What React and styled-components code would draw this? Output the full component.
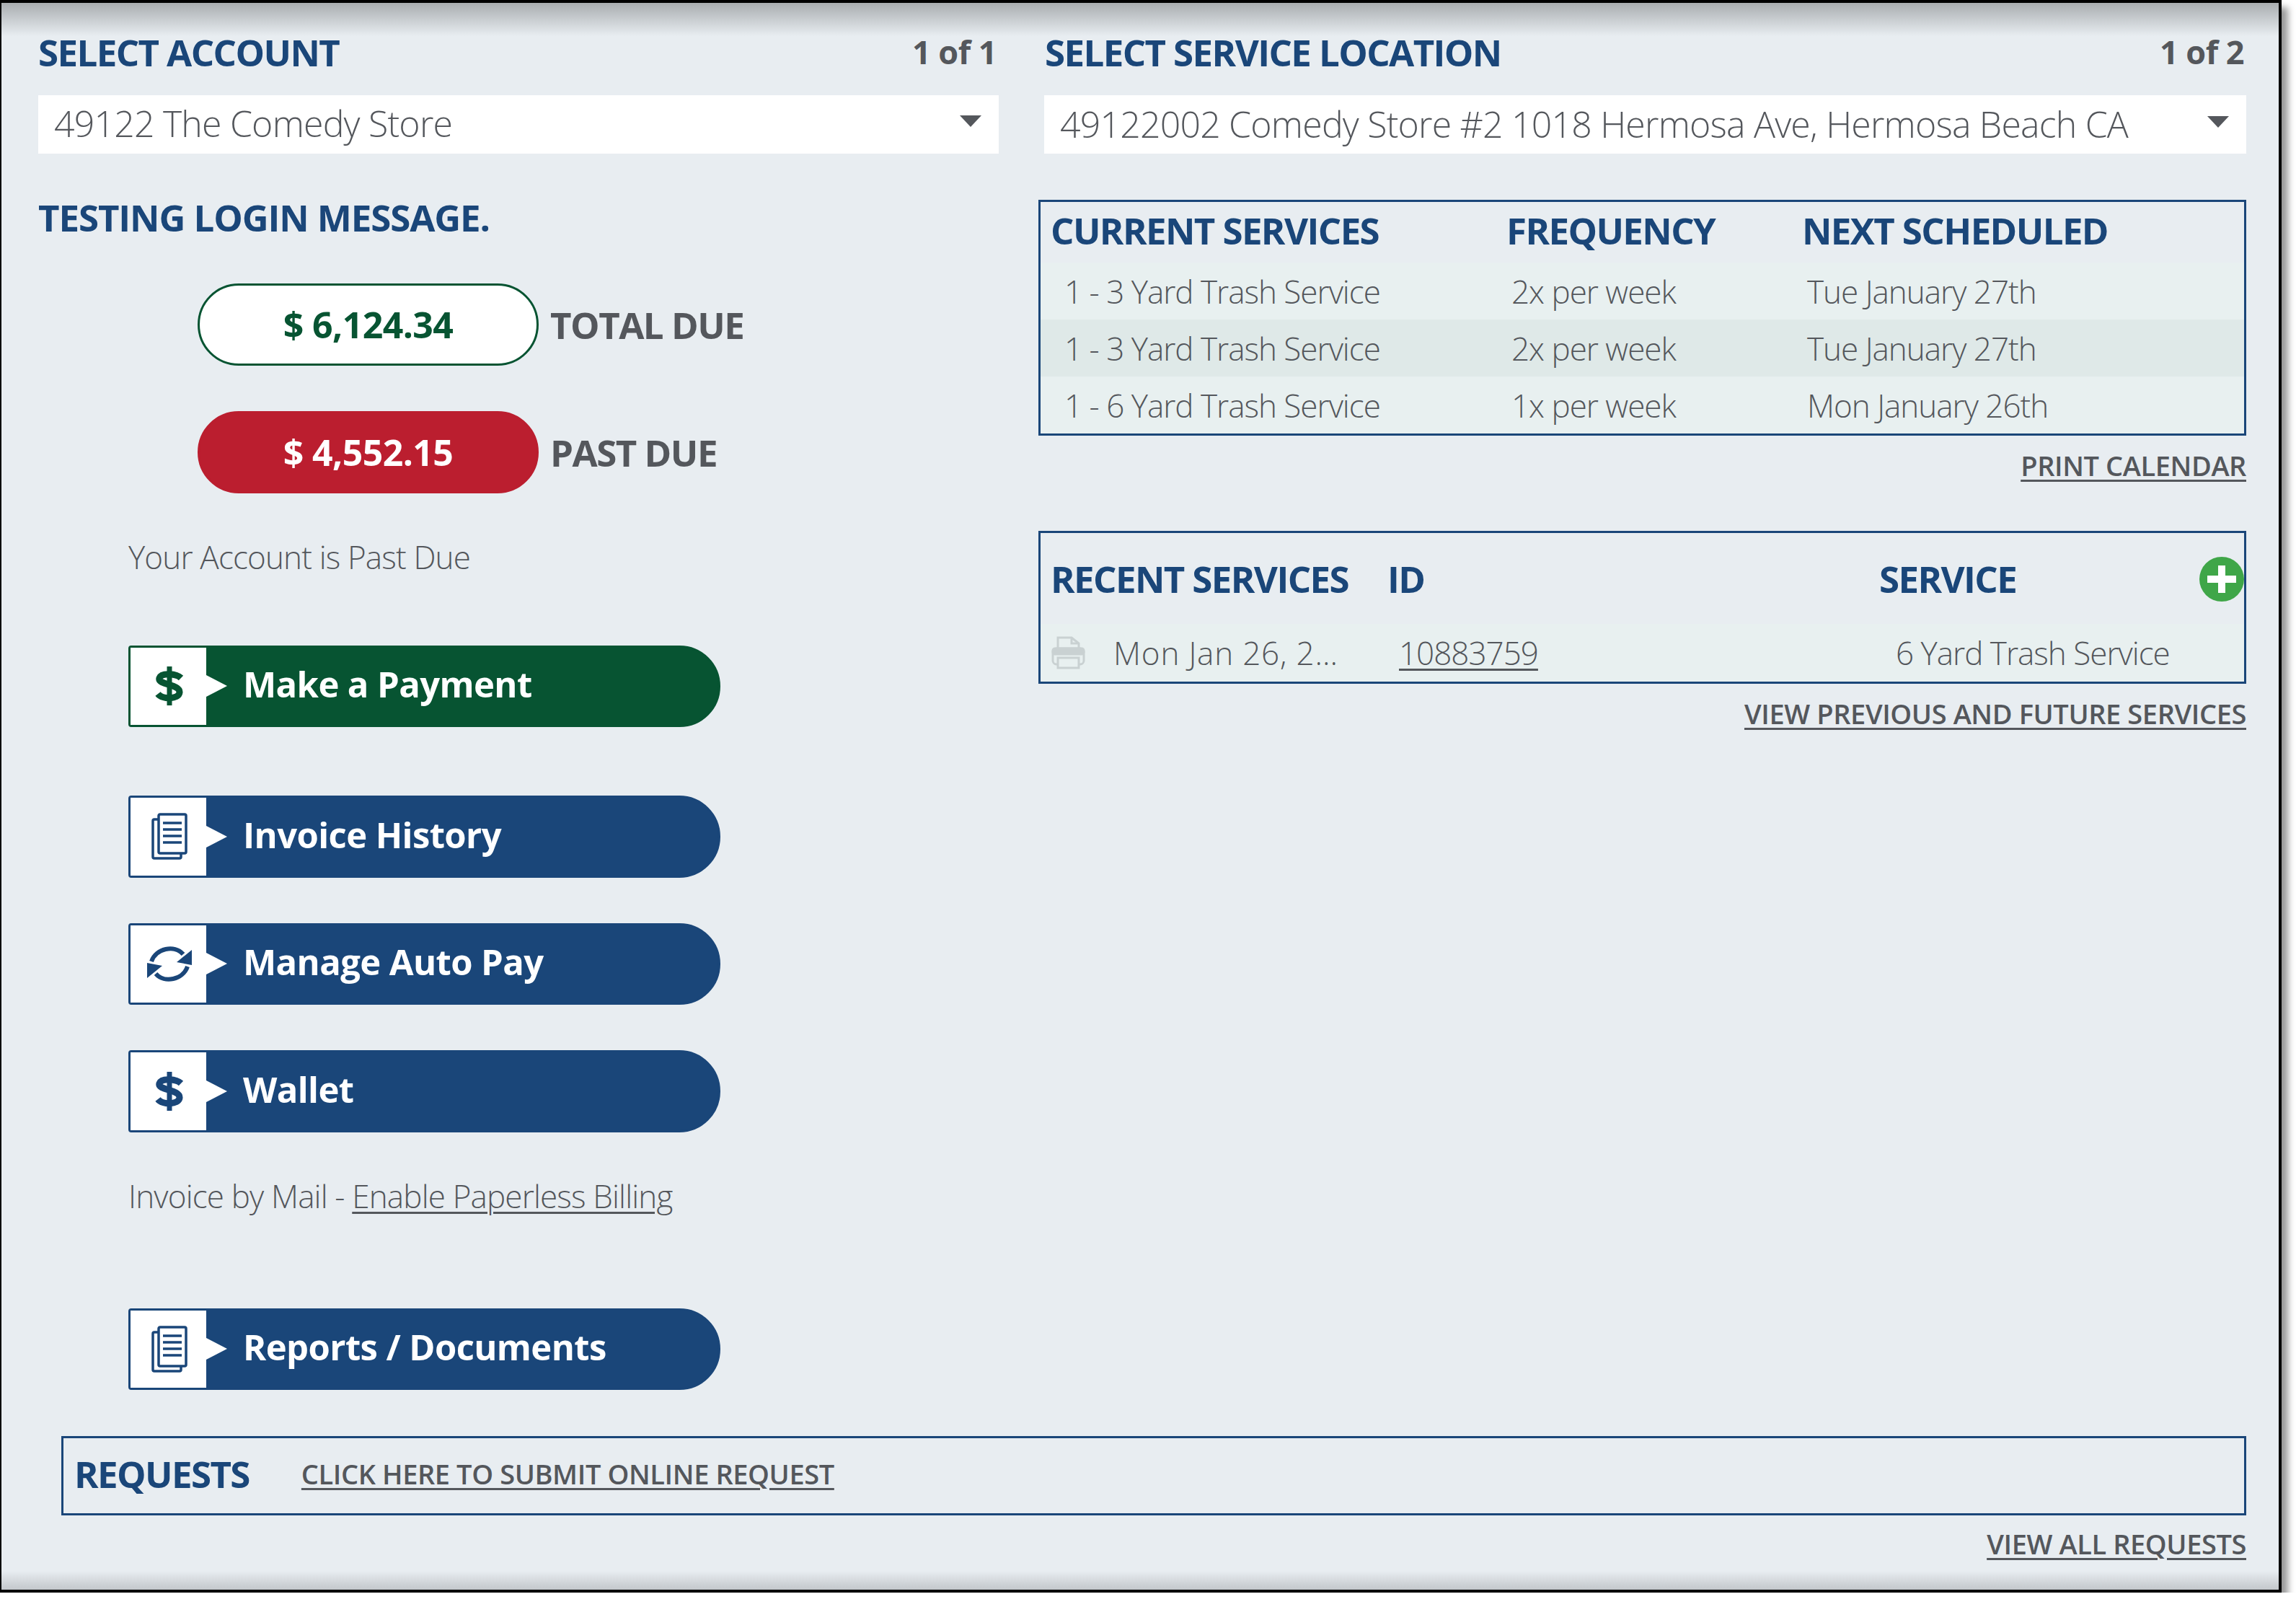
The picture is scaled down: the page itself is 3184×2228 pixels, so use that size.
import React from "react";
import styled, { createGlobalStyle } from "styled-components";

const navy = "#1a4679";
const green = "#075432";
const red = "#bb1e2f";
const gray = "#54575c";

const GlobalStyle = createGlobalStyle`
  html, body {
    margin: 0;
    padding: 0;
    background: #fff;
  }
  * {
    box-sizing: border-box;
  }
`;

const Frame = styled.div`
  width: 3164px;
  height: 2208px;
  border: solid #000;
  border-width: 4px 4px 4px 2px;
  padding: 40px 45px 0 51px;
  box-shadow: 9px 10px 9px rgba(0, 0, 0, 0.4);
  font-family: "Open Sans", sans-serif;
  color: ${gray};
  background:
    linear-gradient(to bottom, #a9adb0 0, #e8edf1 46px) top / 100% 46px no-repeat,
    linear-gradient(to top, #c3c7cb 0, #e8edf1 26px) bottom / 100% 26px no-repeat,
    #e8edf1;
`;
const Columns = styled.div`
  display: grid;
  grid-template-columns: 1332px 1675px;
  column-gap: 55px;
`;
const LeftColumn = styled.div`
  display: flex;
  flex-direction: column;
  height: 1883px;
`;
const RightColumn = styled.div`
  display: flex;
  flex-direction: column;
`;
const LabelRow = styled.div`
  display: flex;
  justify-content: space-between;
  align-items: center;
  height: 56px;
  padding-left: ${(p) => p.$inset || 0}px;
  padding-right: ${(p) => p.$end || 0}px;
`;
const Label = styled.div`
  color: ${navy};
  font-size: 51px;
  font-weight: 700;
  letter-spacing: -1.6px;
`;
const Count = styled.div`
  font-size: 45px;
  font-weight: 700;
  letter-spacing: -0.5px;
  margin-bottom: 2px;
`;
const Select = styled.div`
  display: flex;
  justify-content: space-between;
  align-items: center;
  height: 81px;
  margin: 32px 0 0 ${(p) => p.$inset || 0}px;
  padding: 0 24px 2px 22px;
  background: #fff;
  font-size: 50px;
  font-weight: 300;
  letter-spacing: -0.8px;
`;
const Caret = styled.div`
  width: 0;
  height: 0;
  margin-bottom: 6px;
  border-left: 15px solid transparent;
  border-right: 15px solid transparent;
  border-top: 16px solid ${gray};
`;
const Message = styled(Label)`
  line-height: 60px;
  margin-top: 58px;
  letter-spacing: -1.1px;
`;
const DueRow = styled.div`
  display: flex;
  align-items: center;
  gap: 16px;
  margin: ${(p) => p.$top}px 0 0 221px;
`;
const Pill = styled.div`
  display: flex;
  justify-content: center;
  align-items: center;
  width: 473px;
  height: 114px;
  border-radius: 57px;
  border: 3px solid ${(p) => (p.$alert ? red : green)};
  background: ${(p) => (p.$alert ? red : "#fff")};
  color: ${(p) => (p.$alert ? "#fff" : green)};
  font-size: 50px;
  font-weight: 700;
  letter-spacing: -0.6px;
`;
const DueLabel = styled.div`
  font-size: 51px;
  font-weight: 700;
  letter-spacing: -1.5px;
`;
const Note = styled.div`
  height: 50px;
  line-height: 50px;
  margin: ${(p) => p.$top}px 0 0 125px;
  font-size: 44px;
  font-weight: 300;
  letter-spacing: -0.85px;
`;
const NoteLink = styled.span`
  text-decoration: underline;
  text-decoration-thickness: 3px;
  text-underline-offset: 5px;
`;
const ActionButton = styled.div`
  position: relative;
  display: flex;
  align-items: center;
  width: 821px;
  height: 114px;
  margin: ${(p) => p.$top}px 0 0 125px;
  border: 3px solid ${(p) => p.$color};
  border-radius: 4px 57px 57px 4px;
  background: ${(p) => p.$color};
  color: #fff;
  font-size: 49px;
  font-weight: 700;
  letter-spacing: -0.6px;
`;
const IconBox = styled.div`
  display: flex;
  justify-content: center;
  align-items: center;
  width: 105px;
  height: 100%;
  padding-left: 3px;
  background: #fff;
  color: ${(p) => p.$color};
`;
const Pointer = styled.div`
  width: 0;
  height: 0;
  border-top: 15px solid transparent;
  border-bottom: 15px solid transparent;
  border-left: 29px solid #fff;
`;
const ButtonText = styled.div`
  margin: 0 0 6px 22px;
`;
const TableBox = styled.div`
  border: 3px solid ${navy};
  margin-top: ${(p) => p.$top}px;
`;
const HeadRow = styled.div`
  display: grid;
  grid-template-columns: ${(p) => p.$cols};
  align-items: center;
  height: ${(p) => p.$height}px;
  padding: 0 0 ${(p) => p.$lift || 0}px 14px;
  color: ${navy};
  font-size: 51px;
  font-weight: 700;
  letter-spacing: -1.6px;
`;
const BodyRow = styled.div`
  display: grid;
  grid-template-columns: ${(p) => p.$cols};
  align-items: center;
  height: ${(p) => p.$height}px;
  padding-left: ${(p) => p.$inset}px;
  background: ${(p) => (p.$alt ? "#dfe9e8" : "#e8f0f0")};
  font-size: 44px;
  font-weight: 300;
  letter-spacing: -1px;
`;
const LinkRow = styled.div`
  display: flex;
  justify-content: flex-end;
  align-items: center;
  height: 56px;
  margin-top: ${(p) => p.$top}px;
`;
const SmallLink = styled.span`
  font-size: 38px;
  font-weight: 600;
  letter-spacing: -0.4px;
  text-decoration: underline;
  text-decoration-thickness: 3px;
  text-underline-offset: 5px;
`;
const AddButton = styled.div`
  position: absolute;
  top: 33px;
  right: 0;
  width: 62px;
  height: 62px;
`;
const RecentBox = styled(TableBox)`
  position: relative;
`;
const PlainCell = styled.div`
  white-space: nowrap;
`;
const DateCell = styled(PlainCell)`
  letter-spacing: 0.8px;
`;
const RowLink = styled(NoteLink)`
  justify-self: start;
`;
const RequestsBox = styled.div`
  display: flex;
  align-items: center;
  gap: 72px;
  height: 110px;
  margin: 64px 0 0 32px;
  padding: 0 0 6px 15px;
  border: 3px solid ${navy};
`;

function DollarIcon() {
  return (
    <svg width="40" height="54" viewBox="0 0 40 54" fill="none" stroke="currentColor">
      <path d="M20 0V54" strokeWidth="7" />
      <path d="M36 16C30 10 9 8 6 16C3 26 35 24 34 36C33 46 10 46 4 38" strokeWidth="9" />
    </svg>
  );
}

function DocsIcon() {
  return (
    <svg width="50" height="65" viewBox="0 0 50 65" fill="none" stroke="currentColor" strokeWidth="3.5">
      <path d="M9 9H4Q2 9 2 11V61Q2 63 4 63H39Q41 63 41 61V56" />
      <rect x="10" y="2" width="38" height="54" rx="2" />
      <path d="M16 14H42M16 23H42M16 32H42M16 41H42" />
    </svg>
  );
}

function SyncIcon() {
  return (
    <svg width="62" height="55" viewBox="0 0 62 55" fill="none" stroke="currentColor">
      <path d="M6 24C12 6 38 0 50 14" strokeWidth="6" />
      <polygon points="62,8 62,29 41,25" fill="currentColor" stroke="none" />
      <path d="M56 31C50 49 24 55 12 41" strokeWidth="6" />
      <polygon points="0,47 0,26 21,30" fill="currentColor" stroke="none" />
    </svg>
  );
}

function PrinterIcon() {
  return (
    <svg width="47" height="46" viewBox="0 0 47 46" fill="none" stroke="#c9d1d2" strokeWidth="3">
      <path d="M9 17V2H28L38 10V17" />
      <path d="M28 2V10H38" />
      <rect x="2" y="17" width="43" height="22" rx="5" />
      <rect x="2" y="17" width="43" height="8" rx="3" fill="#c9d1d2" />
      <rect x="9" y="30" width="29" height="14" fill="#e8f0f0" />
    </svg>
  );
}

function PlusIcon() {
  return (
    <svg width="62" height="62" viewBox="0 0 62 62">
      <circle cx="31" cy="31" r="31" fill="#3fa648" />
      <path d="M31 12V50M11 31H51" stroke="#fff" strokeWidth="10" />
    </svg>
  );
}

function Action({ color, top, icon, children }) {
  return (
    <ActionButton $color={color} $top={top}>
      <IconBox $color={color}>{icon}</IconBox>
      <Pointer />
      <ButtonText>{children}</ButtonText>
    </ActionButton>
  );
}

const services = [
  ["1 - 3 Yard Trash Service", "2x per week", "Tue January 27th"],
  ["1 - 3 Yard Trash Service", "2x per week", "Tue January 27th"],
  ["1 - 6 Yard Trash Service", "1x per week", "Mon January 26th"],
];

export default function App() {
  return (
    <>
      <GlobalStyle />
      <Frame>
        <Columns>
          <LeftColumn>
            <LabelRow $end={3}>
              <Label>SELECT ACCOUNT</Label>
              <Count>1 of 1</Count>
            </LabelRow>
            <Select>
              49122 The Comedy Store
              <Caret />
            </Select>
            <Message>TESTING LOGIN MESSAGE.</Message>
            <DueRow $top={62}>
              <Pill>$ 6,124.34</Pill>
              <DueLabel>TOTAL DUE</DueLabel>
            </DueRow>
            <DueRow $top={63}>
              <Pill $alert>$ 4,552.15</Pill>
              <DueLabel>PAST DUE</DueLabel>
            </DueRow>
            <Note $top={63}>Your Account is Past Due</Note>
            <Action color={green} top={98} icon={<DollarIcon />}>Make a Payment</Action>
            <Action color={navy} top={95} icon={<DocsIcon />}>Invoice History</Action>
            <Action color={navy} top={63} icon={<SyncIcon />}>Manage Auto Pay</Action>
            <Action color={navy} top={63} icon={<DollarIcon />}>Wallet</Action>
            <Note $top={63}>
              Invoice by Mail - <NoteLink>Enable Paperless Billing</NoteLink>
            </Note>
            <Action color={navy} top={131} icon={<DocsIcon />}>Reports / Documents</Action>
          </LeftColumn>
          <RightColumn>
            <LabelRow $inset={9} $end={3}>
              <Label>SELECT SERVICE LOCATION</Label>
              <Count>1 of 2</Count>
            </LabelRow>
            <Select $inset={8}>
              49122002 Comedy Store #2 1018 Hermosa Ave, Hermosa Beach CA
              <Caret />
            </Select>
            <TableBox $top={64}>
              <HeadRow $cols="632px 410px 1fr" $height={84} $lift={6}>
                <div>CURRENT SERVICES</div>
                <div>FREQUENCY</div>
                <div>NEXT SCHEDULED</div>
              </HeadRow>
              {services.map((row, i) => (
                <BodyRow key={i} $cols="620px 410px 1fr" $height={79} $inset={33} $alt={i === 1}>
                  <PlainCell>{row[0]}</PlainCell>
                  <PlainCell>{row[1]}</PlainCell>
                  <PlainCell>{row[2]}</PlainCell>
                </BodyRow>
              ))}
            </TableBox>
            <LinkRow $top={13}>
              <SmallLink>PRINT CALENDAR</SmallLink>
            </LinkRow>
            <RecentBox $top={63}>
              <HeadRow $cols="467px 682px 1fr" $height={126}>
                <div>RECENT SERVICES</div>
                <div>ID</div>
                <div>SERVICE</div>
              </HeadRow>
              <AddButton>
                <PlusIcon />
              </AddButton>
              <BodyRow $cols="86px 396px 689px 1fr" $height={80} $inset={15}>
                <PrinterIcon />
                <DateCell>Mon Jan 26, 2…</DateCell>
                <RowLink>10883759</RowLink>
                <PlainCell>6 Yard Trash Service</PlainCell>
              </BodyRow>
            </RecentBox>
            <LinkRow $top={13}>
              <SmallLink>VIEW PREVIOUS AND FUTURE SERVICES</SmallLink>
            </LinkRow>
          </RightColumn>
        </Columns>
        <RequestsBox>
          <Label>REQUESTS</Label>
          <SmallLink>CLICK HERE TO SUBMIT ONLINE REQUEST</SmallLink>
        </RequestsBox>
        <LinkRow $top={11}>
          <SmallLink>VIEW ALL REQUESTS</SmallLink>
        </LinkRow>
      </Frame>
    </>
  );
}
